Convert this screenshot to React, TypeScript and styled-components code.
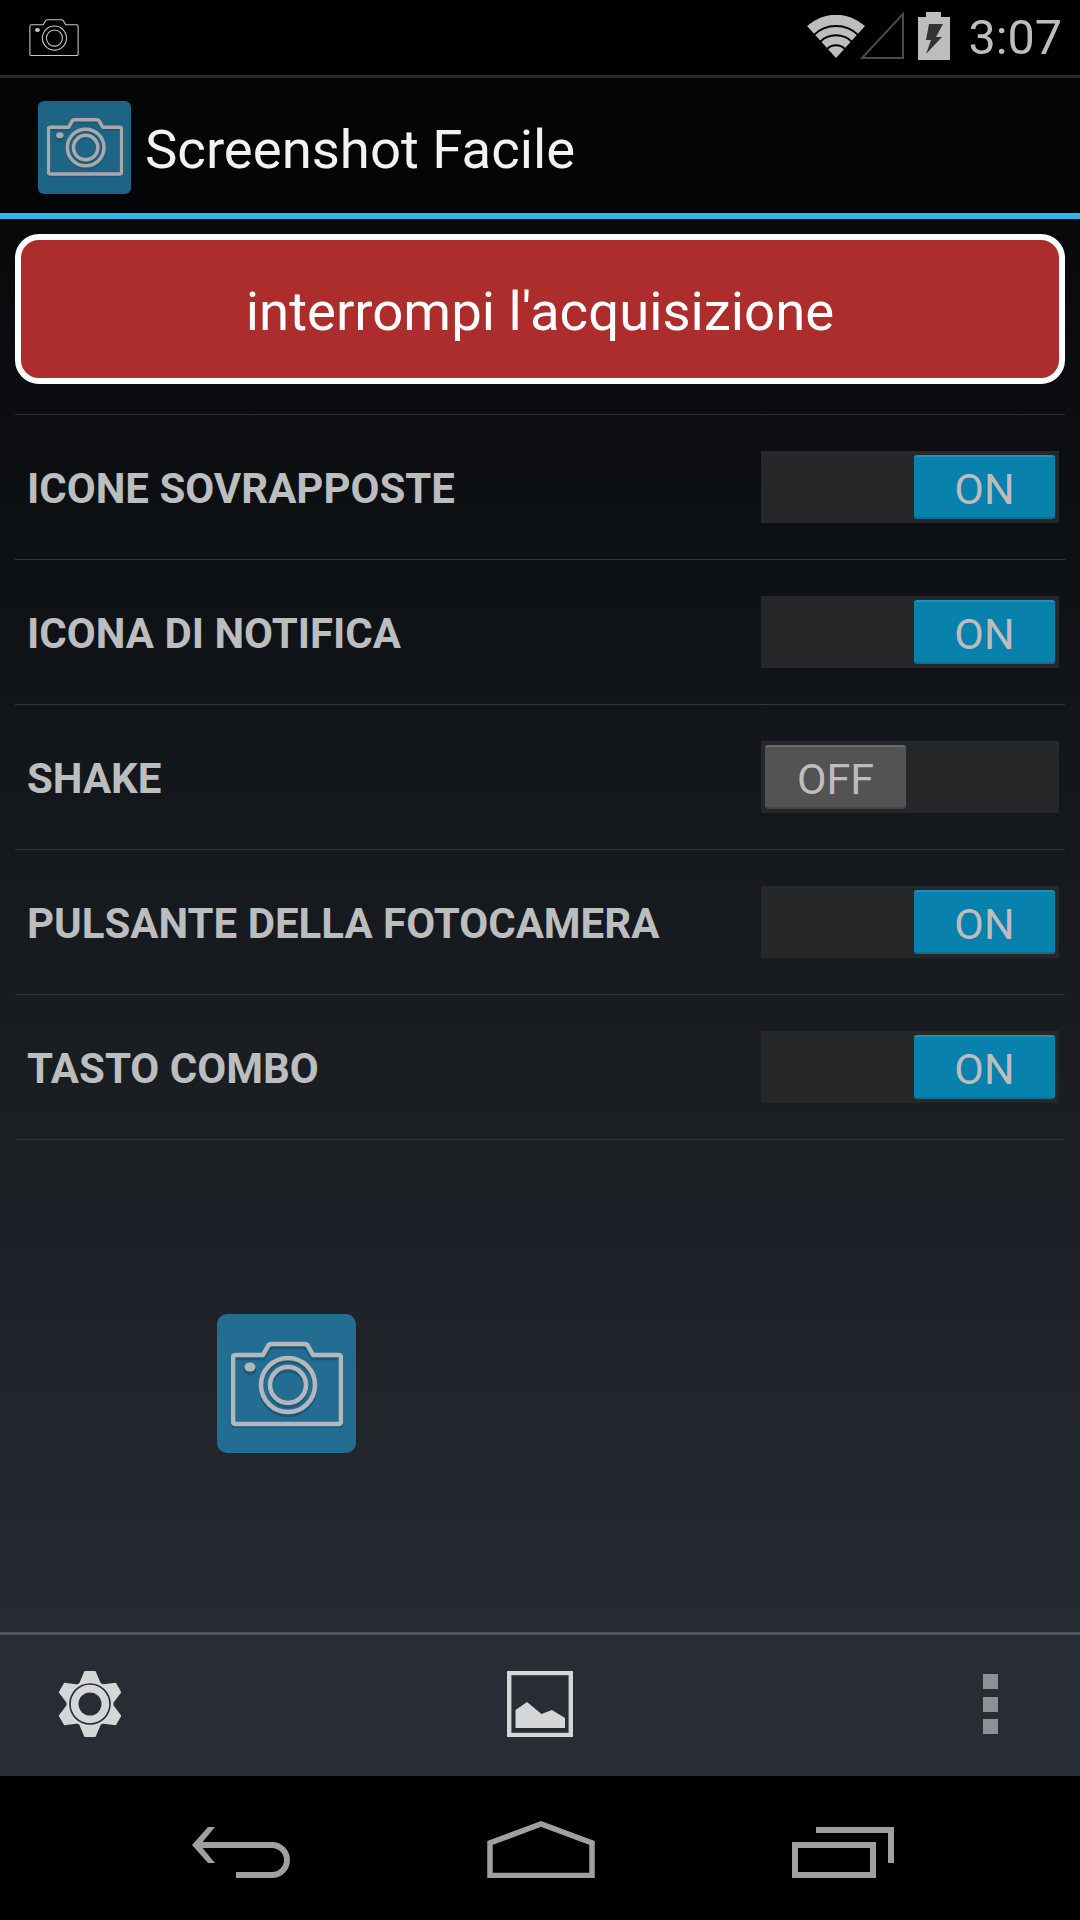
import React from 'react';
import styled, { createGlobalStyle } from 'styled-components';

const Global = createGlobalStyle`
  html, body { margin: 0; padding: 0; background: #000; }
  * { box-sizing: border-box; }
`;
const Screen = styled.div`
  width: 1080px; height: 1920px; display: flex; flex-direction: column;
  font-family: Roboto, "Liberation Sans", sans-serif; background: #000; overflow: hidden;
`;
const StatusBar = styled.div`
  height: 78px; flex: none; background: #000; border-bottom: 3px solid #2a2a2a;
  display: flex; align-items: center; padding: 0 18px 3px 29px;
`;
const StatusCamera = styled.div`
  display: flex; padding-top: 4px;
`;
const Spacer = styled.div`flex: 1;`;
const Clock = styled.span`
  font-size: 48.5px; color: #bdbdbd; font-weight: 400; margin-left: 18px; line-height: 1; padding-top: 5px;
`;
const ActionBar = styled.div`
  height: 141px; flex: none; background: #040506; border-bottom: 6px solid #33b5e5;
  display: flex; align-items: center; padding: 3px 0 0 38px; gap: 14px;
`;
const AppTile = styled.div<{ $size: number; $radius: number; $color: string }>`
  width: ${p => p.$size}px; height: ${p => p.$size}px; border-radius: ${p => p.$radius}px;
  background: ${p => p.$color}; display: flex; align-items: center; justify-content: center; flex: none;
`;
const Title = styled.h1`
  margin: 0; font-size: 54.5px; font-weight: 400; color: #f2f2f2; line-height: 1; padding-top: 4px;
`;
const Body = styled.div`
  flex: 1; display: flex; flex-direction: column; padding: 15px 15px 0;
  background: linear-gradient(#07090b, #262b32);
`;
const Stop = styled.button`
  height: 150px; flex: none; width: 100%; border: 6px solid #fff; border-radius: 24px;
  background: #ad2c2c; color: #fff; font-family: inherit; font-size: 54.5px; padding: 4px 0 0;
`;
const List = styled.div`
  margin-top: 30px; border-top: 1px solid #2c2e31;
`;
const Row = styled.div`
  height: 145px; border-bottom: 1px solid #333639; display: flex; align-items: center;
  justify-content: space-between; padding: 0 6px 0 12px;
`;
const Label = styled.span`
  font-size: 42px; font-weight: 700; color: #bcbdbe; padding-top: 2px;
`;
const Track = styled.div<{ $on: boolean }>`
  width: 298px; height: 72px; background: #262728; display: flex; align-items: center;
  padding: 0 4px; justify-content: ${p => (p.$on ? 'flex-end' : 'flex-start')};
`;
const Thumb = styled.div<{ $on: boolean }>`
  width: 141px; height: 64px; border-radius: 3px; display: flex; align-items: center; justify-content: center;
  font-size: 43px; color: #bdbdbd; padding-top: 4px;
  background: ${p => (p.$on ? '#0981ad' : '#535353')};
  border-top: 2px solid ${p => (p.$on ? '#1f8fb8' : '#6a6a6a')};
  border-bottom: 2px solid ${p => (p.$on ? '#076f96' : '#444')};
`;
const Canvas = styled.div`
  flex: 1; padding: 174px 0 0 202px;
`;
const BottomBar = styled.div`
  height: 144px; flex: none; background: #282c34; border-top: 3px solid #4f5256;
  display: grid; grid-template-columns: 180px 1fr 180px; align-items: center; justify-items: center;
  padding-bottom: 3px;
`;
const NavBar = styled.div`
  height: 144px; flex: none; background: #000; display: flex; justify-content: center;
  align-items: flex-end; gap: 197px; padding: 0 0 42px 5px;
`;
const BarCell = styled.div`
  display: flex;
`;
const Dots = styled.div`
  display: flex; flex-direction: column; gap: 7.5px;
`;
const Dot = styled.div`
  width: 15px; height: 15px; background: #8e9194;
`;
const StatusIcon = styled.svg<{ $left?: number }>`
  display: block; flex: none; margin-left: ${p => p.$left ?? 0}px;
`;

const body = 'M5 15 H32 L37 6 Q38 4 41 4 H73 Q76 4 77 6 L82 15 H107 Q110 15 110 18 V81 Q110 84 107 84 H5 Q2 84 2 81 V18 Q2 15 5 15 Z';
const Camera = ({ w, sw, color, shadow = false }: { w: number; sw: number; color: string; shadow?: boolean }) => (
  <svg width={w} height={(w * 88) / 112} viewBox="0 0 112 88" fill="none">
    {shadow && (
      <g stroke="#1a5a78" strokeWidth={sw} transform="translate(0 3)">
        <path d={body} />
        <circle cx="57" cy="45" r="27" />
        <circle cx="57" cy="45" r="18" />
        <ellipse cx="19" cy="27" rx="4" ry="3" fill="#1a5a78" />
      </g>
    )}
    <path d={body} stroke={color} strokeWidth={sw} strokeLinejoin="round" />
    <circle cx="57" cy="45" r="27" stroke={color} strokeWidth={sw} />
    <circle cx="57" cy="45" r="18" stroke={color} strokeWidth={sw} />
    <ellipse cx="19" cy="27" rx="5.5" ry="4.5" fill={color} />
  </svg>
);

const Wifi = () => (
  <StatusIcon width="58" height="43" viewBox="0 0 58 43">
    <path d="M0 11 A43 43 0 0 1 58 11 L29 43 Z" fill="#bdbdbd" />
    <g fill="none" stroke="#000" strokeWidth="2">
      <circle cx="29" cy="43" r="32" />
      <circle cx="29" cy="43" r="22.7" />
      <circle cx="29" cy="43" r="12.7" />
    </g>
  </StatusIcon>
);
const Signal = () => (
  <StatusIcon width="44" height="48" viewBox="0 0 44 48" fill="none" $left={-5}>
    <path d="M2 46 L43 2 V46 Z" stroke="#4a4a4a" strokeWidth="2" />
  </StatusIcon>
);
const Battery = () => (
  <StatusIcon width="32" height="48" viewBox="0 0 32 48" $left={14}>
    <path d="M8 0 H23 V5 H32 V48 H0 V5 H8 Z" fill="#bdbdbd" />
    <path d="M11 12 H25 L18 25 H24 L8 42 L13 28 H8 Z" fill="#333" />
  </StatusIcon>
);
const Gear = () => (
  <svg width="62" height="66" viewBox="-31 -33 62 66">
    <g fill="#d4d6d8">
      {[0, 60, 120, 180, 240, 300].map(a => (
        <path key={a} d="M-5.5 -33 H5.5 L11 -20 H-11 Z" transform={`rotate(${a})`} />
      ))}
      <circle cx="0" cy="0" r="23.5" />
    </g>
    <circle cx="0" cy="0" r="20" fill="none" stroke="#282c34" strokeWidth="1.6" />
    <circle cx="0" cy="0" r="11.5" fill="#282c34" />
  </svg>
);
const Picture = () => (
  <svg width="66" height="66" viewBox="0 0 66 66">
    <rect x="2.2" y="2" width="61.6" height="62" fill="none" stroke="#d4d6d8" strokeWidth="4.4" />
    <path d="M8.5 39 L20 31 L34.5 43 L45 39 L58 47 V57 H8.5 Z" fill="#d4d6d8" />
  </svg>
);
const Back = () => (
  <svg width="98" height="51" viewBox="0 0 98 51" fill="none">
    <path d="M16 0 H23 L8 18 L23 36 H16 L0 18 Z" fill="#a0a0a0" />
    <path d="M5 18 H80 A15 15 0 0 1 80 48 H44" stroke="#a0a0a0" strokeWidth="6" />
  </svg>
);
const Home = () => (
  <svg width="108" height="57" viewBox="0 0 108 57" fill="none">
    <path d="M3 54.5 V22 L54 3 L105 22 V54.5 Z" stroke="#a0a0a0" strokeWidth="5.5" />
  </svg>
);
const Recent = () => (
  <svg width="102" height="51" viewBox="0 0 102 51" fill="none" stroke="#a0a0a0" strokeWidth="6">
    <rect x="3" y="18" width="78" height="30" />
    <path d="M24 3 H99 V36" />
  </svg>
);

const rows: [string, boolean][] = [
  ['ICONE SOVRAPPOSTE', true],
  ['ICONA DI NOTIFICA', true],
  ['SHAKE', false],
  ['PULSANTE DELLA FOTOCAMERA', true],
  ['TASTO COMBO', true],
];

export default function App() {
  return (
    <Screen>
      <Global />
      <StatusBar>
        <StatusCamera>
          <Camera w={50} sw={2.4} color="#c8c8c8" />
        </StatusCamera>
        <Spacer />
        <Wifi />
        <Signal />
        <Battery />
        <Clock>3:07</Clock>
      </StatusBar>
      <ActionBar>
        <AppTile $size={93} $radius={6} $color="#1e6485">
          <Camera w={76} sw={5.2} color="#a8a9aa" shadow />
        </AppTile>
        <Title>Screenshot Facile</Title>
      </ActionBar>
      <Body>
        <Stop>interrompi l'acquisizione</Stop>
        <List>
          {rows.map(([name, on]) => (
            <Row key={name}>
              <Label>{name}</Label>
              <Track $on={on}>
                <Thumb $on={on}>{on ? 'ON' : 'OFF'}</Thumb>
              </Track>
            </Row>
          ))}
        </List>
        <Canvas>
          <AppTile $size={139} $radius={10} $color="#236c92">
            <Camera w={112} sw={4.6} color="#b4b8bb" shadow />
          </AppTile>
        </Canvas>
      </Body>
      <BottomBar>
        <BarCell><Gear /></BarCell>
        <BarCell><Picture /></BarCell>
        <BarCell>
          <Dots><Dot /><Dot /><Dot /></Dots>
        </BarCell>
      </BottomBar>
      <NavBar>
        <Back />
        <Home />
        <Recent />
      </NavBar>
    </Screen>
  );
}
